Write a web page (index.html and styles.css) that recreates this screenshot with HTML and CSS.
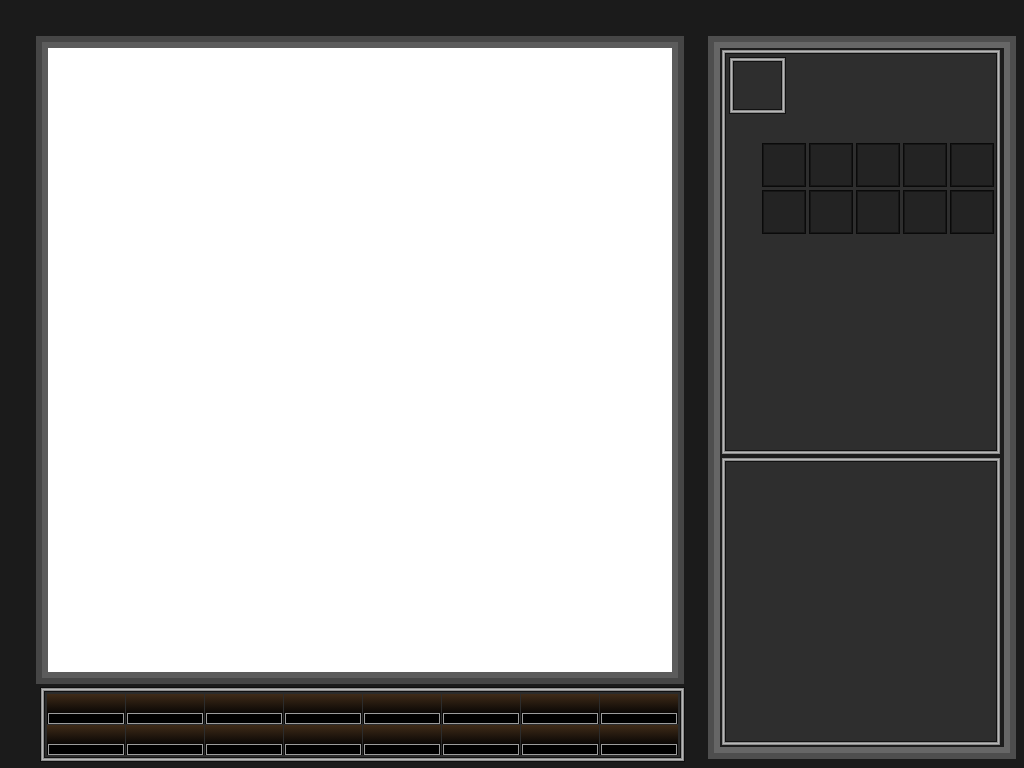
FILE: index.html
```html
<!DOCTYPE html>
<html>
<head>
<meta charset="utf-8">
<link rel="stylesheet" href="styles.css">
</head>
<body>
<div class="page">
  <div class="left">
    <div class="view"></div>
    <div class="bar">
      <div class="cell"><div class="glow"></div><div class="field"></div></div>
      <div class="cell"><div class="glow"></div><div class="field"></div></div>
      <div class="cell"><div class="glow"></div><div class="field"></div></div>
      <div class="cell"><div class="glow"></div><div class="field"></div></div>
      <div class="cell"><div class="glow"></div><div class="field"></div></div>
      <div class="cell"><div class="glow"></div><div class="field"></div></div>
      <div class="cell"><div class="glow"></div><div class="field"></div></div>
      <div class="cell"><div class="glow"></div><div class="field"></div></div>
      <div class="cell"><div class="glow"></div><div class="field"></div></div>
      <div class="cell"><div class="glow"></div><div class="field"></div></div>
      <div class="cell"><div class="glow"></div><div class="field"></div></div>
      <div class="cell"><div class="glow"></div><div class="field"></div></div>
      <div class="cell"><div class="glow"></div><div class="field"></div></div>
      <div class="cell"><div class="glow"></div><div class="field"></div></div>
      <div class="cell"><div class="glow"></div><div class="field"></div></div>
      <div class="cell"><div class="glow"></div><div class="field"></div></div>
    </div>
  </div>
  <div class="side">
    <div class="panel upper">
      <div class="portrait"></div>
      <div class="slots">
        <div class="slot"></div><div class="slot"></div><div class="slot"></div><div class="slot"></div><div class="slot"></div>
        <div class="slot"></div><div class="slot"></div><div class="slot"></div><div class="slot"></div><div class="slot"></div>
      </div>
    </div>
    <div class="panel lower"></div>
  </div>
</div>
</body>
</html>
```

FILE: styles.css
```css
html, body {
  margin: 0;
  padding: 0;
  background: #1b1b1b;
  font-family: "Liberation Sans", sans-serif;
}

.page {
  display: flex;
  align-items: flex-start;
  gap: 24px;
  padding: 36px 0 0 36px;
}

.left {
  display: flex;
  flex-direction: column;
  width: 648px;
}

.view {
  width: 648px;
  height: 648px;
  box-sizing: border-box;
  border: 6px solid #464646;
  background: #ffffff;
  box-shadow: inset 0 0 0 6px #5c5c5c;
}

.bar {
  margin: 3px 0 0 4px;
  width: 645px;
  height: 75px;
  box-sizing: border-box;
  border: 1px solid #0e0e0e;
  padding: 6px;
  background: #2c2c2c;
  box-shadow:
    inset 0 0 0 1px #8c8c8c,
    inset 0 0 0 2px #b8b8b8,
    inset 0 0 0 3px #8c8c8c,
    inset 0 0 0 4px #111111;
  display: grid;
  grid-template-columns: repeat(8, 78px);
  grid-auto-rows: 30px;
  gap: 1px;
}

.cell {
  display: flex;
  flex-direction: column;
  background: #050505;
}

.glow {
  height: 19px;
  background: linear-gradient(#3f2b18, #0a0705);
}

.field {
  height: 11px;
  margin: 0 1px;
  box-sizing: border-box;
  border: 1px solid #9c9c9c;
  background: #000000;
}

.side {
  width: 308px;
  height: 723px;
  box-sizing: border-box;
  border: 6px solid #4e4e4e;
  padding: 8px 10px 8px 8px;
  background: #1c1c1c;
  box-shadow: inset 0 0 0 6px #666666;
  display: flex;
  flex-direction: column;
  gap: 4px;
}

.panel {
  background: #2e2e2e;
  box-shadow:
    inset 0 0 0 1px #8a8a8a,
    inset 0 0 0 2px #b8b8b8,
    inset 0 0 0 3px #8a8a8a,
    inset 0 0 0 4px #111111;
}

.upper {
  height: 404px;
  box-sizing: border-box;
  padding: 7px;
  display: flex;
  flex-direction: column;
  align-items: flex-start;
}

.lower {
  flex: 1;
}

.portrait {
  width: 57px;
  height: 57px;
  box-sizing: border-box;
  border: 1px solid #111111;
  background: #2e2e2e;
  box-shadow:
    inset 0 0 0 1px #8a8a8a,
    inset 0 0 0 2px #b8b8b8,
    inset 0 0 0 3px #8a8a8a,
    inset 0 0 0 4px #111111;
}

.slots {
  margin: 29px 0 0 33px;
  display: grid;
  grid-template-columns: repeat(5, 44px);
  grid-auto-rows: 44px;
  gap: 3px;
}

.slot {
  box-sizing: border-box;
  border: 1px solid #0a0a0a;
  background: #232323;
  box-shadow: inset 0 0 0 1px #161616;
}
```
